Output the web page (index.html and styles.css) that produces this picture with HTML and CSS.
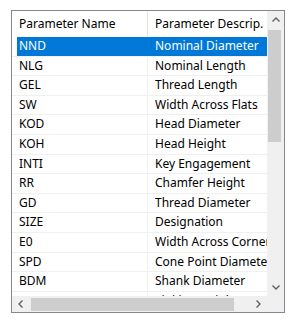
FILE: index.html
```
<!DOCTYPE html>
<html lang="en">
<head>
    <meta charset="UTF-8">
    <title>Parameters</title>
    <link rel="stylesheet" href="styles.css">
</head>
<body>

    <!-- Parameter list -->
    <div class="listview">
        <div class="viewport">
            <div class="header">
                <div class="cell name">Parameter Name</div>
                <div class="cell desc">Parameter Descrip.</div>
            </div>
            <div class="row selected"><div class="cell name">NND</div><div class="cell desc">Nominal Diameter</div></div>
            <div class="row"><div class="cell name">NLG</div><div class="cell desc">Nominal Length</div></div>
            <div class="row"><div class="cell name">GEL</div><div class="cell desc">Thread Length</div></div>
            <div class="row"><div class="cell name">SW</div><div class="cell desc">Width Across Flats</div></div>
            <div class="row"><div class="cell name">KOD</div><div class="cell desc">Head Diameter</div></div>
            <div class="row"><div class="cell name">KOH</div><div class="cell desc">Head Height</div></div>
            <div class="row"><div class="cell name">INTI</div><div class="cell desc">Key Engagement</div></div>
            <div class="row"><div class="cell name">RR</div><div class="cell desc">Chamfer Height</div></div>
            <div class="row"><div class="cell name">GD</div><div class="cell desc">Thread Diameter</div></div>
            <div class="row"><div class="cell name">SIZE</div><div class="cell desc">Designation</div></div>
            <div class="row"><div class="cell name">E0</div><div class="cell desc">Width Across Corners</div></div>
            <div class="row"><div class="cell name">SPD</div><div class="cell desc">Cone Point Diameter</div></div>
            <div class="row"><div class="cell name">BDM</div><div class="cell desc">Shank Diameter</div></div>
            <div class="row"><div class="cell name">DKH</div><div class="cell desc">Sinking Height</div></div>
        </div>

        <!-- vertical scrollbar -->
        <div class="vscroll">
            <div class="arrow">
                <svg width="8" height="5" viewBox="0 0 8 5"><path d="M0.5 4.5 L4 1 L7.5 4.5" fill="none" stroke="#606060" stroke-width="1.4"/></svg>
            </div>
            <div class="track"><div class="thumb"></div></div>
            <div class="arrow">
                <svg width="8" height="5" viewBox="0 0 8 5"><path d="M0.5 0.5 L4 4 L7.5 0.5" fill="none" stroke="#606060" stroke-width="1.4"/></svg>
            </div>
        </div>

        <!-- horizontal scrollbar -->
        <div class="hscroll">
            <div class="arrow">
                <svg width="5" height="8" viewBox="0 0 5 8"><path d="M4.5 0.5 L1 4 L4.5 7.5" fill="none" stroke="#606060" stroke-width="1.4"/></svg>
            </div>
            <div class="track"><div class="thumb"></div></div>
            <div class="arrow">
                <svg width="5" height="8" viewBox="0 0 5 8"><path d="M0.5 0.5 L4 4 L0.5 7.5" fill="none" stroke="#606060" stroke-width="1.4"/></svg>
            </div>
        </div>
        <div class="corner"></div>
    </div>

</body>
</html>
```

FILE: styles.css
```
body {
    margin: 0;
    background: #fff;
    font-family: 'Noto Sans', sans-serif;
    font-size: 12px;
    color: #000;
}

.listview {
    box-sizing: border-box;
    width: 274px;
    height: 303px;
    margin: 10px 0 0 11px;
    border: 1px solid #828790;
    display: grid;
    grid-template-columns: 255px 17px;
    grid-template-rows: 285px 16px;
    background: #fff;
}

.viewport {
    overflow: hidden;
}

.header {
    display: flex;
    height: 26px;
    align-items: center;
    white-space: nowrap;
}

.header .cell {
    flex: none;
    line-height: 26px;
}

.header .name {
    box-sizing: border-box;
    width: 136px;
    padding-left: 7px;
    border-right: 1px solid #e5e5e5;
}

.header .desc {
    padding-left: 7px;
}

.row {
    box-sizing: border-box;
    height: 19.6px;
    display: flex;
    border-bottom: 1px solid #f0f0f0;
    white-space: nowrap;
}

.row .cell {
    flex: none;
    line-height: 18.6px;
}

.row .name {
    box-sizing: border-box;
    width: 131px;
    margin-left: 5px;
    padding-left: 2px;
    border-right: 1px solid #f0f0f0;
}

.row .desc {
    width: 150px;
    padding-left: 7px;
}

.row.selected .cell {
    background: #0078d7;
    color: #fff;
    border-right-color: #0078d7;
}

.vscroll {
    display: flex;
    flex-direction: column;
    background: #f0f0f0;
}

.vscroll .arrow {
    height: 17px;
    display: flex;
    align-items: center;
    justify-content: center;
}

.vscroll .track {
    flex: 1;
}

.vscroll .thumb {
    width: 13px;
    height: 112px;
    margin: 2px 0 0 1px;
    background: #cdcdcd;
}

.hscroll {
    display: flex;
    background: #f0f0f0;
}

.hscroll .arrow {
    width: 17px;
    display: flex;
    align-items: center;
    justify-content: center;
}

.hscroll .track {
    flex: 1;
    display: flex;
    align-items: center;
}

.hscroll .thumb {
    width: 203px;
    height: 13px;
    margin-left: 2px;
    background: #cdcdcd;
}

.corner {
    background: #f0f0f0;
}
```
